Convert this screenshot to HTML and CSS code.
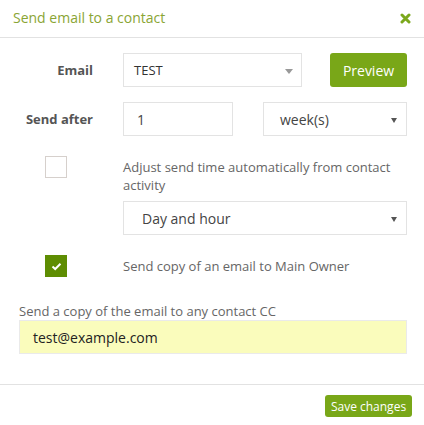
FILE: index.html
```html
<!DOCTYPE html>
<html>
<head>
<meta charset="utf-8">
<link rel="stylesheet" href="styles.css">
</head>
<body>
<div class="modal">
  <div class="header">
    <div class="title">Send email to a contact</div>
    <svg class="close" width="11" height="11" viewBox="0 0 11 11"><path d="M2 2 L9 9 M9 2 L2 9" stroke="#7ba81c" stroke-width="3" stroke-linecap="round"/></svg>
  </div>
  <div class="body">
    <div class="row">
      <div class="label">Email</div>
      <div class="controls">
        <div class="select email-select"><span>TEST</span><i class="arrow grey"></i></div>
        <button class="btn preview">Preview</button>
      </div>
    </div>
    <div class="row">
      <div class="label">Send after</div>
      <div class="controls">
        <div class="input num">1</div>
        <div class="select week"><span>week(s)</span><i class="arrow"></i></div>
      </div>
    </div>
    <div class="row check-row">
      <div class="box-col"><span class="checkbox"></span></div>
      <div class="check-text">Adjust send time automatically from contact activity</div>
    </div>
    <div class="row day-row">
      <div class="spacer"></div>
      <div class="select day"><span>Day and hour</span><i class="arrow"></i></div>
    </div>
    <div class="row check-row2">
      <div class="box-col"><span class="checkbox checked"><svg width="11" height="9" viewBox="0 0 11 9"><path d="M1.5 4.5 L4.2 7 L9.5 1.8" fill="none" stroke="#fff" stroke-width="2"/></svg></span></div>
      <div class="check-text">Send copy of an email to Main Owner</div>
    </div>
    <div class="cc">
      <div class="cc-label">Send a copy of the email to any contact CC</div>
      <div class="cc-input">test@example.com</div>
    </div>
  </div>
  <div class="footer">
    <button class="btn save">Save changes</button>
  </div>
</div>
</body>
</html>
```
FILE: styles.css
```css
* { box-sizing: border-box; }
body {
  margin: 0;
  background: #fff;
  font-family: "Open Sans", "Noto Sans", sans-serif;
  color: #666;
}
.modal { width: 424px; }
.header {
  height: 38px;
  border-bottom: 1px solid #e2e2e2;
  display: flex;
  align-items: center;
  justify-content: space-between;
  padding: 0 13px 2px 13px;
}
.title {
  font-size: 14px;
  color: #8aa534;
}
.close { margin-top: 1px; }
.body { padding: 15px 17px 0 19px; }
.row {
  display: flex;
  align-items: center;
  margin-bottom: 15px;
}
.label {
  width: 74px;
  text-align: right;
  font-weight: bold;
  font-size: 13px;
  color: #555;
  margin-right: 30px;
  flex: none;
}
.spacer { width: 104px; flex: none; }
.controls {
  display: flex;
  align-items: center;
  flex: 1;
}
.select, .input {
  height: 34px;
  border: 1px solid #e3e3e3;
  background: #fff;
  font-size: 13px;
  color: #444;
  display: flex;
  align-items: center;
  position: relative;
}
.email-select { width: 179px; padding-left: 10px; }
.email-select span { color: #333; }
.arrow {
  position: absolute;
  right: 9px;
  top: 15px;
  width: 0; height: 0;
  border-left: 3px solid transparent;
  border-right: 3px solid transparent;
  border-top: 5px solid #555;
}
.arrow.grey {
  right: 8px;
  top: 15px;
  border-left-width: 4px;
  border-right-width: 4px;
  border-top: 5px solid #999;
}
.btn {
  font-family: "Open Sans", "Noto Sans", sans-serif;
  border: none;
  color: #fff;
  background: #79a718;
  border-radius: 3px;
  cursor: pointer;
}
.preview {
  margin-left: 28px;
  width: 77px;
  height: 34px;
  font-size: 14px;
}
.num { width: 110px; padding-left: 13px; font-size: 14px; }
.week { width: 144px; margin-left: 30px; padding-left: 16px; font-size: 14px; }
.check-row { align-items: flex-start; margin-top: 20px; margin-bottom: 0; }
.box-col { width: 104px; flex: none; padding-left: 26px; }
.checkbox {
  display: flex;
  align-items: center;
  justify-content: center;
  width: 22px;
  height: 22px;
  border: 1px solid #d6d0cc;
  background: #fff;
}
.checkbox.checked { background: #5e8d02; border-color: #5e8d02; }
.check-text {
  font-size: 13px;
  line-height: 18px;
  color: #666;
  padding-top: 2px;
}
.day-row { margin-top: 7px; margin-bottom: 0; }
.day { flex: 1; padding-left: 18px; font-size: 14px; }
.check-row2 { margin-top: 20px; margin-bottom: 0; }
.check-row2 .check-text { padding-top: 0; }
.cc { margin-top: 25px; }
.cc-label { font-size: 13px; color: #666; line-height: 18px; }
.cc-input {
  height: 34px;
  width: 388px;
  background: #fafcbc;
  border: 1px solid #eaeaea;
  font-size: 14px;
  color: #222;
  display: flex;
  align-items: center;
  padding-left: 13px;
}
.footer {
  margin-top: 30px;
  border-top: 1px solid #e2e2e2;
  display: flex;
  justify-content: flex-end;
  padding: 10px 12px 0 0;
}
.save {
  height: 22px;
  width: 87px;
  font-size: 12px;
  padding: 0;
}
```
